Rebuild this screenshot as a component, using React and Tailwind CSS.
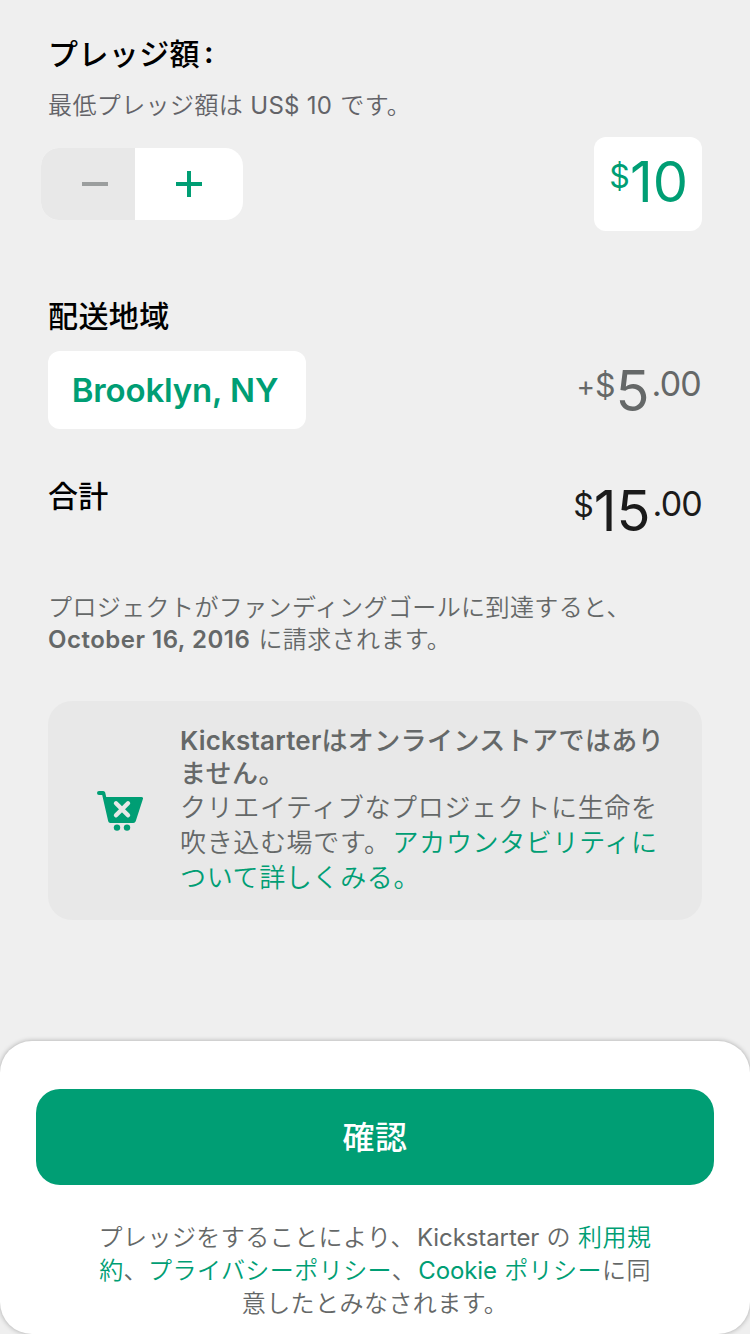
import React from "react";

function Stepper() {
  return (
    <div className="-ml-[7px] flex h-[72px] w-[202px] overflow-hidden rounded-[18px] bg-white">
      <button className="flex w-[94px] items-center bg-[#e8e8e8] pl-[40px]" aria-label="minus">
        <svg width="28" height="28" viewBox="0 0 28 28" stroke="#9b9e9e" strokeWidth="4">
          <path d="M1 14H27" />
        </svg>
      </button>
      <button className="flex w-[108px] items-center justify-center" aria-label="plus">
        <svg width="28" height="28" viewBox="0 0 28 28" stroke="#009e74" strokeWidth="4">
          <path d="M1 14H27M14 1V27" />
        </svg>
      </button>
    </div>
  );
}

function Amount({ sign, whole, cents, className }) {
  return (
    <div className={`flex items-start whitespace-nowrap ${className}`}>
      {sign && <span className="text-[28px] leading-[32px] font-normal">{sign}</span>}
      <span className="text-[32px] leading-[31px] font-normal">$</span>
      <span className="text-[56px] leading-[43px] font-normal">{whole}</span>
      {cents && <span className="ml-[2px] text-[34px] leading-[27px] font-normal tracking-[-0.8px]">{cents}</span>}
    </div>
  );
}

function CartIcon() {
  return (
    <svg className="mt-[90px] shrink-0" width="46" height="40" viewBox="0 0 46 40" fill="none">
      <path d="M2 0H6.2Q7.8 0 8.2 1.6L9.2 6H44.3Q46.5 6 45.9 8L38.7 30.2Q38.1 32 36.3 32H13.3Q11.6 32 11.2 30.3L5.2 4H2A2 2 0 0 1 2 0Z" fill="#009e74" />
      <circle cx="20" cy="36.6" r="3.2" fill="#009e74" />
      <circle cx="30" cy="36.6" r="3.2" fill="#009e74" />
      <path d="M19 12.3L31 24.3M31 12.3L19 24.3" stroke="#e8e8e8" strokeWidth="4.4" strokeLinecap="round" />
    </svg>
  );
}

export default function App() {
  return (
    <main
      lang="ja"
      className="flex h-[1334px] w-[750px] flex-col overflow-hidden bg-[#efefef] font-['Inter','Noto_Sans_CJK_JP',sans-serif] text-[24px] text-[#656868] [&_*]:whitespace-nowrap"
    >
      <section className="flex h-[231px] justify-between pr-12 pl-12">
        <div className="flex flex-col pt-[34px]">
          <h2 className="h-10 text-[30px] leading-10 font-medium tracking-[0.4px] text-black">プレッジ額<span className="ml-[4px] align-[2px] leading-none font-semibold">:</span></h2>
          <p className="mt-[15px] h-8 leading-[33px] font-[350] tracking-[0.4px] text-[#636368]">
            最低プレッジ額は <span className="mr-px font-normal tracking-[0.25px]">US$ 10</span> です。
          </p>
          <div className="mt-[27px]"><Stepper /></div>
        </div>
        <div className="mt-[137px] flex h-[94px] w-[108px] justify-end rounded-xl bg-white pt-6 pr-[14px]">
          <Amount whole="10" className="text-[#009e74]" />
        </div>
      </section>

      <section className="mt-[65px] px-12">
        <h2 className="h-10 text-[30px] leading-10 font-medium tracking-[0.4px] text-black">配送地域</h2>
        <div className="mt-[15px] flex h-[78px] justify-between">
          <button className="w-[258px] rounded-xl bg-white pr-1 text-[33px] leading-[78px] font-semibold tracking-[-0.15px] text-[#009e74]">
            Brooklyn, NY
          </button>
          <Amount sign="+" whole="5" cents=".00" className="mt-[19px] mr-px" />
        </div>
      </section>

      <section className="mt-[47px] flex h-[60px] justify-between px-12">
        <h2 className="h-10 text-[30px] leading-10 font-medium tracking-[0.2px] text-black">合計</h2>
        <Amount whole="15" cents=".00" className="mt-[14px] text-[#1b1b1b]" />
      </section>

      <p className="mt-[56px] h-[65px] px-12 leading-[32px] font-[350] tracking-[0.4px]">
        プロジェクトがファンディングゴールに到達すると、<br />
        <span className="mr-px font-semibold tracking-[0.5px]">October 16, 2016</span> に請求されます。
      </p>

      <section className="mx-12 mt-[44px] flex h-[219px] rounded-3xl bg-[#e8e8e8] pl-[49px]">
        <CartIcon />
        <div className="ml-[37px] pt-[23px] text-[26px] leading-[34px] font-[350] tracking-[0.4px]">
          <p className="leading-[33px] font-medium"><span className="font-semibold tracking-[0.2px]">Kickstarter</span>はオンラインストアではあり<br />ません。</p>
          <p className="leading-[35px] tracking-[0.65px]">
            クリエイティブなプロジェクトに生命を<br />
            吹き込む場です。<a className="text-[#009e74]"><span className="pl-[2px]">アカウンタビリティに</span><br />ついて詳しくみる。</a>
          </p>
        </div>
      </section>

      <footer className="mt-[121px] h-[293px] shrink-0 rounded-[32px] bg-white px-9 pt-12 shadow-[0_0_5px_rgba(0,0,0,0.3)]">
        <button className="h-24 w-full rounded-3xl bg-[#009e74] text-[32px] leading-[97px] font-medium tracking-[0.4px] text-white">確認</button>
        <p className="mt-[36px] text-center leading-[33px] font-[350] tracking-[0.45px]">
          プレッジをすることにより、<span className="ml-[2px] font-normal tracking-[-0.1px]">Kickstarter</span> の <a className="text-[#009e74]">利用規</a><br />
          <a className="text-[#009e74]">約</a>、<a className="text-[#009e74]">プライバシーポリシー</a>、<a className="text-[#009e74]"><span className="ml-[2px] font-normal tracking-[-0.1px]">Cookie</span> ポリシー</a>に同<br />
          意したとみなされます。
        </p>
      </footer>
    </main>
  );
}
